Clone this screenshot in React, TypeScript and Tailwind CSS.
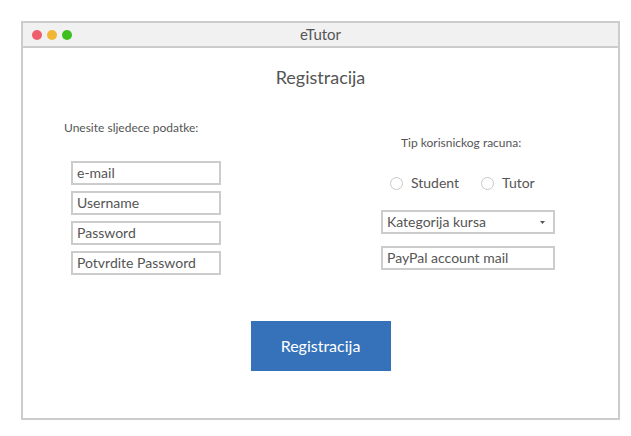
import React from "react";

const LEFT_FIELDS = ["e-mail", "Username", "Password", "Potvrdite Password"];

function Field({ label }: { label: string }) {
  return (
    <div className="h-[24px] w-[150px] border-2 border-[#cccccc] pl-[4px] flex items-center text-[14px] leading-none text-[#555555]">
      {label}
    </div>
  );
}

function Radio({ label }: { label: string }) {
  return (
    <div className="flex items-center gap-[8px]">
      <span className="h-[13px] w-[13px] rounded-full border-[1.5px] border-[#c8c8c8] bg-white" />
      <span className="text-[14px] leading-[16px] text-[#555555]">{label}</span>
    </div>
  );
}

export default function App() {
  return (
    <div
      className="min-h-[436px] w-[631px] bg-white pt-[21px] pl-[21px]"
      style={{ fontFamily: "Lato, 'Open Sans', sans-serif" }}
    >
      <div className="flex h-[399px] w-[599px] flex-col border-2 border-[#cccccc] bg-white">
        {/* title bar */}
        <div className="grid h-[25px] grid-cols-[1fr_auto_1fr] items-center border-b-2 border-[#cccccc] bg-[#f1f1f1]">
          <div className="flex items-center gap-[5px] pl-[9px]">
            <span className="h-[10px] w-[10px] rounded-full bg-[#ee5f6b]" />
            <span className="h-[10px] w-[10px] rounded-full bg-[#efb733]" />
            <span className="h-[10px] w-[10px] rounded-full bg-[#3dbf1f]" />
          </div>
          <div className="text-[15px] leading-none text-[#555555]">eTutor</div>
          <div />
        </div>

        <div className="flex flex-col">
          <h1 className="pt-[17px] text-center text-[18px] leading-[24px] text-[#555555]">
            Registracija
          </h1>

          <div className="flex h-[186px] pl-[41px]">
            <div className="w-[317px]">
              <div className="mt-[31px] text-[12px] leading-[16px] text-[#555555]">
                Unesite sljedece podatke:
              </div>
              <div className="mt-[25px] ml-[7px] flex flex-col gap-[6px]">
                {LEFT_FIELDS.map((f) => (
                  <Field key={f} label={f} />
                ))}
              </div>
            </div>

            <div className="w-[174px]">
              <div className="mt-[46px] pl-[20px] text-[12px] leading-[16px] text-[#555555]">
                Tip korisnickog racuna:
              </div>
              <div className="mt-[24px] flex items-center gap-[22px] pl-[9px]">
                <Radio label="Student" />
                <Radio label="Tutor" />
              </div>
              <div className="mt-[19px] flex h-[24px] w-[174px] items-center justify-between border-2 border-[#cccccc] pl-[4px] pr-[8px] text-[14px] leading-none text-[#555555]">
                <span>Kategorija kursa</span>
                <svg width="5" height="3" viewBox="0 0 5 3">
                  <path d="M0 0h5L2.5 3z" fill="#555555" />
                </svg>
              </div>
              <div className="mt-[12px] flex h-[24px] w-[174px] items-center border-2 border-[#cccccc] pl-[4px] text-[14px] leading-none text-[#555555]">
                PayPal account mail
              </div>
            </div>
          </div>

          <div className="mt-[46px] flex justify-center">
            <button className="h-[50px] w-[140px] bg-[#3572b9] text-[16px] text-white">
              Registracija
            </button>
          </div>
        </div>
      </div>
    </div>
  );
}
